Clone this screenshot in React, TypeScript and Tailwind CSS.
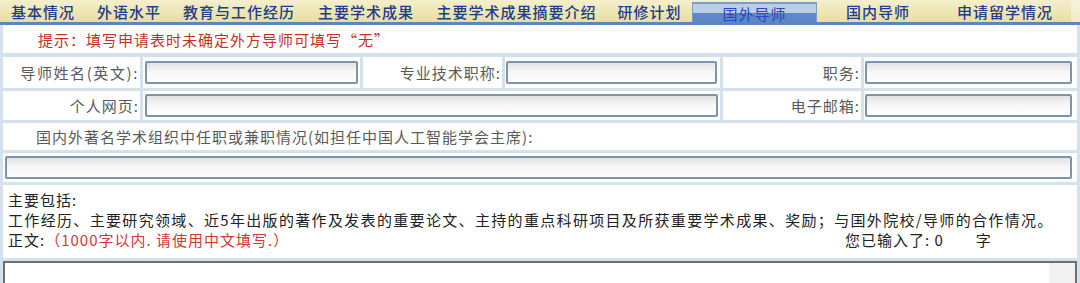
import React from "react";

const tabs: { label: string; w: number; active?: boolean }[] = [
  { label: "基本情况", w: 86 },
  { label: "外语水平", w: 86 },
  { label: "教育与工作经历", w: 134 },
  { label: "主要学术成果", w: 120 },
  { label: "主要学术成果摘要介绍", w: 181 },
  { label: "研修计划", w: 85 },
  { label: "国外导师", w: 125, active: true },
  { label: "国内导师", w: 122 },
  { label: "申请留学情况", w: 132 },
];

function Input({ className = "" }: { className?: string }) {
  return (
    <div
      className={
        "h-[23px] border-2 border-[#7f93aa] rounded-[2px] bg-gradient-to-b from-[#e3e3e3] via-[#f7f7f7] to-[#fdfdfd] " +
        className
      }
    />
  );
}

function Label({ children }: { children: React.ReactNode }) {
  return (
    <div className="bg-white flex items-center justify-end pr-[1px] text-[#5a5a5a]">
      {children}
    </div>
  );
}

export default function App() {
  return (
    <div
      className="w-[1080px] h-[283px] overflow-hidden bg-[#d3e2ec] text-[15px] tracking-[1px] leading-none"
      style={{ fontFamily: '"Noto Sans CJK SC", "Noto Sans", sans-serif' }}
    >
      {/* Tab bar */}
      <div className="flex h-[22px] bg-gradient-to-b from-[#f4efcc] to-[#e7df9f]">
        {tabs.map((t) =>
          t.active ? (
            <div
              key={t.label}
              style={{ width: t.w }}
              className="relative flex items-center justify-center mt-[2px] border-t-2 border-x border-[#7a9cc8] bg-gradient-to-b from-[#b9cfe8] from-50% to-[#5d88c3] to-50% text-[#2a44c6]"
            >
              {t.label}
            </div>
          ) : (
            <div
              key={t.label}
              style={{ width: t.w }}
              className="flex items-center justify-center text-[#243a8c] font-medium"
            >
              {t.label}
            </div>
          )
        )}
        <div className="flex-1 bg-gradient-to-b from-[#f6f3dc] to-[#efeac4]" />
      </div>
      <div className="h-[3px] bg-[#5b84c2]" />

      <div className="flex flex-col gap-[3px] px-[3px]">
        {/* hint */}
        <div className="bg-white h-[28px] flex items-center pl-[35px] text-[#c2302b]">
          提示：填写申请表时未确定外方导师可填写“无”
        </div>

        {/* row 2 & 3 */}
        <div className="grid grid-cols-[137px_217px_139px_215px_138px_1fr] gap-[3px] pt-[1px]">
          <Label>
            <span className="tracking-[1.6px]">导师姓名(英文):</span>
          </Label>
          <div className="bg-white px-[2px] py-[4px]">
            <Input />
          </div>
          <Label>专业技术职称:</Label>
          <div className="bg-white px-[1px] py-[4px]">
            <Input className="mr-[2px]" />
          </div>
          <Label>职务:</Label>
          <div className="bg-white pl-[1px] pr-[5px] py-[4px]">
            <Input />
          </div>

          <Label>个人网页:</Label>
          <div className="col-span-3 bg-white px-[2px] py-[3px]">
            <Input />
          </div>
          <Label>电子邮箱:</Label>
          <div className="bg-white pl-[1px] pr-[5px] py-[3px]">
            <Input />
          </div>
        </div>

        {/* row 4 */}
        <div className="bg-white h-[27px] flex items-center pl-[33px] text-[#5a5a5a]">
          国内外著名学术组织中任职或兼职情况(如担任中国人工智能学会主席):
        </div>

        {/* row 5 */}
        <div className="bg-white pl-[2px] pr-[5px] py-[3px]">
          <Input />
        </div>

        {/* row 6 */}
        <div className="bg-white h-[73px] pl-[5px] pt-[7px] text-[#222] flex flex-col gap-[5px]">
          <div>主要包括:</div>
          <div className="tracking-[1.33px]">
            工作经历、主要研究领域、近5年出版的著作及发表的重要论文、主持的重点科研项目及所获重要学术成果、奖励；与国外院校/导师的合作情况。
          </div>
          <div className="flex">
            <div className="w-[837px]">
              正文:<span className="text-[#d0383a]">（1000字以内. 请使用中文填写.）</span>
            </div>
            <div>
              您已输入了: 0<span className="inline-block w-[32px]" />字
            </div>
          </div>
        </div>

        {/* textarea */}
        <div className="h-[40px] border-2 border-[#6f6f6f] bg-white flex justify-end">
          <div className="w-[26px] bg-[#f1f1f1]" />
        </div>
      </div>
    </div>
  );
}
